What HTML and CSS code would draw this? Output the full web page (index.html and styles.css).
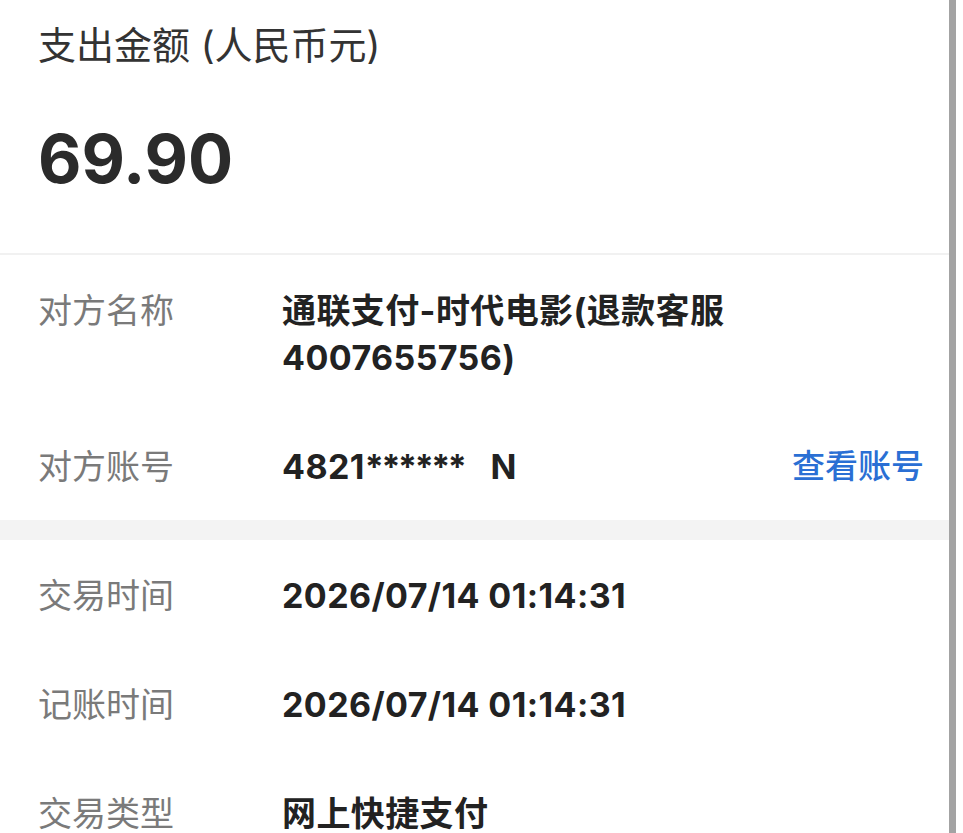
FILE: index.html
```html
<!DOCTYPE html>
<html lang="zh-CN">
<head>
<meta charset="utf-8">
<title>交易详情</title>
<link rel="stylesheet" href="styles.css">
</head>
<body>
<div class="page">
  <main class="sheet">
    <section class="summary">
      <div class="summary-title">支出金额 (人民币元)</div>
      <div class="summary-amount">69.90</div>
    </section>

    <section class="group">
      <div class="row">
        <div class="label">对方名称</div>
        <div class="value">通联支付-时代电影(退款客服<br>4007655756)</div>
      </div>
      <div class="row">
        <div class="label">对方账号</div>
        <div class="value">4821<span class="mask">******</span><span class="gap"></span>N</div>
        <a class="link" href="#">查看账号</a>
      </div>
    </section>

    <section class="group group-split">
      <div class="row">
        <div class="label">交易时间</div>
        <div class="value">2026/07/14 01:14:31</div>
      </div>
      <div class="row">
        <div class="label">记账时间</div>
        <div class="value">2026/07/14 01:14:31</div>
      </div>
      <div class="row">
        <div class="label">交易类型</div>
        <div class="value">网上快捷支付</div>
      </div>
    </section>
  </main>
  <div class="rail"></div>
</div>
</body>
</html>
```

FILE: styles.css
```css
html, body {
  margin: 0;
  padding: 0;
  background: #ffffff;
}

body {
  font-family: Inter, "Noto Sans CJK SC", sans-serif;
  color: #222222;
  overflow: hidden;
}

.page {
  display: flex;
  height: 833px;
  background: #ffffff;
}

.sheet {
  width: 949px;
  flex: none;
}

.rail {
  width: 7px;
  flex: none;
  background: #a3a3a3;
}

/* amount header */
.summary {
  padding: 22px 38px 54px;
  border-bottom: 2px solid #f1f1f1;
}

.summary-title {
  font-size: 38px;
  line-height: 47px;
  color: #333333;
}

.summary-amount {
  margin-top: 50px;
  font-size: 67px;
  line-height: 80px;
  font-weight: 700;
  color: #2b2b2b;
}

/* detail rows */
.group-split {
  border-top: 20px solid #f3f3f3;
}

.row {
  display: flex;
  align-items: flex-start;
  padding: 32px 25px 30px 38px;
}

.label {
  width: 244px;
  flex: none;
  font-size: 34px;
  line-height: 47px;
  color: #7a7a7a;
}

.value {
  flex: 1;
  font-size: 34px;
  line-height: 47px;
  font-weight: 700;
  letter-spacing: 0.4px;
  color: #222222;
}

/* masked account digits */
.mask {
  letter-spacing: -2.4px;
}

.gap {
  display: inline-block;
  width: 26px;
}

.link {
  flex: none;
  font-size: 33px;
  line-height: 47px;
  font-weight: 500;
  color: #2a6fd4;
  text-decoration: none;
}
```
